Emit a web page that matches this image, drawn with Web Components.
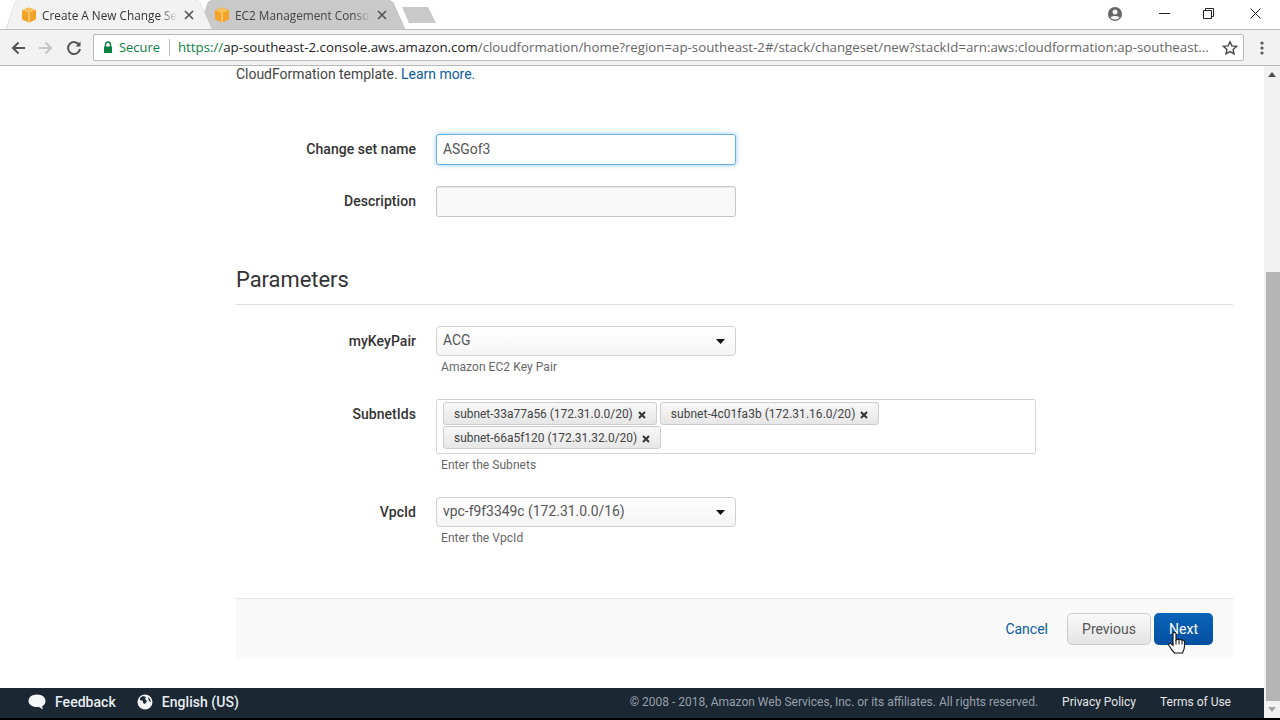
<!DOCTYPE html>
<html>
<head>
<meta charset="utf-8">
<title>Create A New Change Set</title>
<style>
  html, body { margin: 0; height: 100%; overflow: hidden; background: #000; }
  body { display: flex; flex-direction: column; height: 720px; font-family: Roboto, "Liberation Sans", sans-serif; }
</style>
</head>
<body>
<browser-bar></browser-bar>
<console-page>
  <form-panel></form-panel>
  <console-footer slot="footer"></console-footer>
</console-page>

<script>
const cube = `<svg width="16" height="16" viewBox="0 0 16 16"><path d="M8 .5l6 2.200c.6.200 1 .8 1 1.500v7.300c0 .7-.4 1.200-1 1.500L8 15.500l-6-2.500c-.6-.3-1-.8-1-1.500V4.200c0-.7.4-1.300 1-1.500z" fill="#f5a327"/><path d="M1.500 3.300L8 6l6.500-2.700L8 .8z" fill="#fac15f"/><path d="M8 6v9.500" stroke="#fde3b0" stroke-width="1"/></svg>`;

class BrowserTab extends HTMLElement {
    constructor() {
        super();
        this.attachShadow({ mode: 'open' });
    }

    connectedCallback() {
        this.shadowRoot.innerHTML = `
        <style>
            :host { display: block; margin-right: -19px; position: relative; filter: drop-shadow(0 0 .6px #8a8a8a); }
            :host([active]) { z-index: 1; }
            #tab {
                width: 212px; height: 29px; box-sizing: border-box; padding: 0 24px 0 15px;
                display: flex; align-items: center; gap: 5px;
                background: #c9c9c9; color: #444;
                clip-path: polygon(0 100%, 9px 8%, 13px 0, 190px 0, 194px 8%, 206px 100%);
                font: 11.800px "Open Sans", sans-serif;
            }
            :host([active]) #tab { background: #f2f2f2; color: #333; }
            #title { flex: 1; overflow: hidden; white-space: nowrap; margin-right: 2px; -webkit-mask-image: linear-gradient(90deg, #000 88%, transparent); }
            svg { flex: none; }
        </style>
        <div id="tab">${cube}<span id="title"><slot></slot></span>
            <svg width="10" height="10" viewBox="0 0 10 10"><path d="M1 1l8 8M9 1l-8 8" stroke="#555" stroke-width="1.700"/></svg>
        </div>`;
    }
}

class BrowserBar extends HTMLElement {
    constructor() {
        super();
        this.attachShadow({ mode: 'open' });
    }

    connectedCallback() {
        this.shadowRoot.innerHTML = `
        <style>
            :host { display: block; flex: none; font-family: "Open Sans", sans-serif; }
            #strip { height: 29px; display: flex; align-items: flex-start; padding-left: 6px; background: #fff; }
            #new-tab { width: 34px; height: 16px; margin: 7px 0 0 10px; background: #c9c9c9; clip-path: polygon(0 0, 26px 0, 34px 100%, 7px 100%); }
            #window { margin-left: auto; display: flex; align-items: center; height: 27px; padding-right: 19px; }
            #toolbar { box-sizing: border-box; background: #f2f2f2; border-top: 1px solid #bdbdbd; border-bottom: 1px solid #b8b8b8; display: flex; align-items: center; padding-left: 8px; height: 37px; position: relative; }
            .nav { width: 20px; height: 20px; margin-right: 8px; display: flex; align-items: center; justify-content: center; }
            #omni {
                width: 1151px; height: 27px; margin-left: 1px; box-sizing: border-box; background: #fff; border: 1px solid #b9b9b9; border-radius: 2px;
                display: flex; align-items: center; font-size: 13.300px; padding: 0 5px 0 9px; white-space: nowrap;
            }
            #secure { color: #0b8043; margin-left: 6px; padding-right: 9px; border-right: 1px solid #bbb; line-height: 17px; font-size: 12.900px; }
            #url { color: #666; margin-left: 8px; overflow: hidden; flex: 1; font-size: 13.290px; position: relative; top: -1px; }
            #url b { color: #0b8043; font-weight: 400; }
            #url i { color: #222; font-style: normal; }
        </style>
        <div id="strip">
            <browser-tab active>Create A New Change Set</browser-tab>
            <browser-tab>EC2 Management Console</browser-tab>
            <div id="new-tab"></div>
            <div id="window">
                <svg style="margin-right:36px" width="16" height="16" viewBox="0 0 16 16"><circle cx="8" cy="8" r="7" fill="#666"/><circle cx="8" cy="6" r="2.500" fill="#f5f5f5"/><path d="M3.500 11.500c1-2 8-2 9 0-1 1.500-2.500 2-4.500 2s-3.500-.5-4.500-2z" fill="#f5f5f5"/></svg>
                <svg style="margin-right:33px" width="11" height="11" viewBox="0 0 11 11"><path d="M0 5.500h11" stroke="#222"/></svg>
                <svg style="margin-right:36px" width="11" height="11" viewBox="0 0 11 11" fill="none" stroke="#222"><path d="M.5 2.500h8v8h-8zM2.500 2.500v-2h8v8h-2"/></svg>
                <svg style="margin-right:0" width="11" height="11" viewBox="0 0 11 11"><path d="M.5.5l10 10M10.500.5l-10 10" stroke="#222"/></svg>
            </div>
        </div>
        <div id="toolbar">
            <div class="nav"><svg width="16" height="16" viewBox="0 0 16 16" fill="none" stroke="#555" stroke-width="2"><path d="M15 8H3M8.500 2.500L3 8l5.500 5.500"/></svg></div>
            <div class="nav"><svg width="16" height="16" viewBox="0 0 16 16" fill="none" stroke="#c4c4c4" stroke-width="2"><path d="M1 8h12M7.500 2.500L13 8l-5.500 5.500"/></svg></div>
            <div class="nav"><svg width="16" height="16" viewBox="0 0 16 16" fill="none" stroke="#555" stroke-width="2"><path d="M13.500 5.500A6 6 0 1 0 14 9"/><path d="M14.500 1.500v5h-5z" fill="#555" stroke="none"/></svg></div>
            <div id="omni">
                <svg width="10" height="13" viewBox="0 0 10 13"><path d="M2.500 6V3.500a2.500 2.500 0 0 1 5 0V6" fill="none" stroke="#0b8043" stroke-width="1.400"/><rect x="1" y="5.500" width="8" height="6.500" fill="#0b8043"/></svg>
                <span id="secure">Secure</span>
                <span id="url"><b>https://</b><i>ap-southeast-2.console.aws.amazon.com</i>/cloudformation/home?region=ap-southeast-2#/stack/changeset/new?stackId=arn:aws:cloudformation:ap-southeast...</span>
                <svg width="16" height="16" viewBox="0 0 16 16"><path d="M8 1.800l1.900 4.100 4.500.5-3.300 3 .9 4.400L8 11.600l-4 2.200.9-4.400-3.300-3 4.500-.5z" fill="none" stroke="#444" stroke-width="1.400"/></svg>
            </div>
            <svg style="margin-left:16px" width="4" height="14" viewBox="0 0 4 14" fill="#555"><circle cx="2" cy="2" r="1.600"/><circle cx="2" cy="7" r="1.600"/><circle cx="2" cy="12" r="1.600"/></svg>
        </div>`;
    }
}

class ConsolePage extends HTMLElement {
    constructor() {
        super();
        this.attachShadow({ mode: 'open' });
    }

    connectedCallback() {
        this.shadowRoot.innerHTML = `
        <style>
            :host { display: flex; flex: none; height: 652px; background: #fff; }
            #column { flex: 1; min-width: 0; display: flex; flex-direction: column; }
            #main { flex: 1; min-height: 0; padding: 0 31px 0 236px; box-sizing: border-box; }
            #scrollbar { width: 16px; background: #f1f1f1; display: flex; flex-direction: column; align-items: center; box-sizing: border-box; }
            .arrow { height: 16px; flex: none; display: flex; align-items: center; justify-content: center; }
            #gutter { height: 190px; flex: none; }
            #thumb { width: 14px; flex: 1; background: #b4b4b4; margin-left: 1px; }
        </style>
        <div id="column">
            <div id="main"><slot></slot></div>
            <slot name="footer"></slot>
        </div>
        <div id="scrollbar">
            <div class="arrow"><svg width="8" height="5" viewBox="0 0 8 5"><path d="M4 0l4 5H0z" fill="#505050"/></svg></div>
            <div id="gutter"></div>
            <div id="thumb"></div>
            <div class="arrow" style="height:17px"><svg width="8" height="5" viewBox="0 0 8 5"><path d="M4 5l4-5H0z" fill="#a3a3a3"/></svg></div>
        </div>`;
    }
}

class FormRow extends HTMLElement {
    constructor() {
        super();
        this.attachShadow({ mode: 'open' });
    }

    connectedCallback() {
        const help = this.getAttribute('help');
        this.shadowRoot.innerHTML = `
        <style>
            :host { display: grid; grid-template-columns: 180px 1fr; column-gap: 20px; }
            label { font-size: 14px; font-weight: 500; color: #333; text-align: right; line-height: 30px; letter-spacing: .04px; }
            #help { font-size: 12px; color: #666; margin: 4px 0 0 5px; line-height: 14px; letter-spacing: .06px; }
        </style>
        <label>${this.getAttribute('label')}</label>
        <div><slot></slot>${help ? `<div id="help">${help}</div>` : ''}</div>`;
    }
}

class TextBox extends HTMLElement {
    constructor() {
        super();
        this.attachShadow({ mode: 'open' });
    }

    connectedCallback() {
        this.shadowRoot.innerHTML = `
        <style>
            :host { display: block; width: 300px; height: 31px; box-sizing: border-box; border: 1px solid #c6c6c6; border-radius: 3px; background: #f9f9f9; box-shadow: inset 0 1px 1px rgba(0,0,0,.06); padding: 0 6px; font-size: 13.900px; color: #555; line-height: 28px; }
            :host([focused]) { background: #fff; border-color: #66afe9; box-shadow: 0 0 5px rgba(102,175,233,.7); }
        </style>
        <slot></slot>`;
    }
}

class SelectBox extends HTMLElement {
    constructor() {
        super();
        this.attachShadow({ mode: 'open' });
    }

    connectedCallback() {
        this.shadowRoot.innerHTML = `
        <style>
            :host { display: flex; align-items: center; width: 300px; height: 30px; box-sizing: border-box; border: 1px solid #d0d0d0; border-radius: 4px; background: linear-gradient(#fff, #f5f5f5); padding: 0 10px 0 6px; font-size: 13.900px; color: #555; }
            span { flex: 1; position: relative; top: -1px; }
        </style>
        <span><slot></slot></span>
        <svg width="9" height="5" viewBox="0 0 9 5"><path d="M0 0h9L4.500 5z" fill="#111"/></svg>`;
    }
}

class TagChip extends HTMLElement {
    constructor() {
        super();
        this.attachShadow({ mode: 'open' });
    }

    connectedCallback() {
        this.shadowRoot.innerHTML = `
        <style>
            :host { display: inline-flex; align-items: center; gap: 5px; height: 23px; box-sizing: border-box; padding: 0 10px; border: 1px solid #ccc; border-radius: 3px; background: linear-gradient(#f8f8f8, #e6e6e6); font-size: 11.950px; color: #444; white-space: nowrap; }
            svg { position: relative; top: 1px; }
        </style>
        <slot></slot>
        <svg width="8" height="8" viewBox="0 0 8 8"><path d="M1 1l6 6M7 1L1 7" stroke="#333" stroke-width="2"/></svg>`;
    }
}

class FormPanel extends HTMLElement {
    constructor() {
        super();
        this.attachShadow({ mode: 'open' });
    }

    connectedCallback() {
        this.shadowRoot.innerHTML = `
        <style>
            :host { display: block; color: #444; }
            #intro { font-size: 13.950px; line-height: 16px; height: 16px; color: #444; }
            a { color: #0d5a9e; text-decoration: none; }
            h2 { font-size: 21.900px; font-weight: 400; color: #333; margin: 49px 0 21px; height: 38px; line-height: 28px; border-bottom: 1px solid #ddd; box-sizing: content-box; }
            #chips { width: 600px; height: 55px; box-sizing: border-box; border: 1px solid #d5d5d5; border-radius: 2px; padding: 2px 6px 0; display: flex; flex-wrap: wrap; gap: 1px 3px; align-content: flex-start; }
            #actions { margin-top: 53px; height: 60px; box-sizing: border-box; background: #f9f9f9; border-top: 1px solid #e6e6e6; display: flex; align-items: center; justify-content: flex-end; padding-right: 20px; font-size: 14px; }
            #cancel { margin-right: 19px; }
            .btn { height: 32px; box-sizing: border-box; display: flex; align-items: center; justify-content: center; border-radius: 5px; }
            #prev { width: 84px; margin-right: 3px; border: 1px solid #ccc; background: linear-gradient(#f9f9f9, #e4e4e4); color: #555; }
            #next { width: 59px; background: linear-gradient(#0a63b8, #0450a0); color: #fff; position: relative; }
            #cursor { position: absolute; left: 14px; top: 19px; }
        </style>
        <div id="intro">CloudFormation template. <a href="#">Learn more.</a></div>
        <form-row label="Change set name" style="margin-top:52px"><text-box focused>ASGof3</text-box></form-row>
        <form-row label="Description" style="margin-top:21px"><text-box></text-box></form-row>
        <h2>Parameters</h2>
        <form-row label="myKeyPair" help="Amazon EC2 Key Pair"><select-box>ACG</select-box></form-row>
        <form-row label="SubnetIds" help="Enter the Subnets" style="margin-top:25px">
            <div id="chips">
                <tag-chip>subnet-33a77a56 (172.31.0.0/20)</tag-chip>
                <tag-chip style="letter-spacing:.06px">subnet-4c01fa3b (172.31.16.0/20)</tag-chip>
                <tag-chip>subnet-66a5f120 (172.31.32.0/20)</tag-chip>
            </div>
        </form-row>
        <form-row label="VpcId" help="Enter the VpcId" style="margin-top:25px"><select-box>vpc-f9f3349c (172.31.0.0/16)</select-box></form-row>
        <div id="actions">
            <a id="cancel" href="#">Cancel</a>
            <div class="btn" id="prev">Previous</div>
            <div class="btn" id="next">Next
                <svg id="cursor" width="19" height="23" viewBox="0 0 19 23"><path d="M5 2c0-2 3-2 3 0v6c1-1 2.500-1 3 0 1-.8 2.500-.6 3 .4 1-.6 2.500 0 2.500 1.500v4c0 3-1 5-2 7.100H6.500C5 19.500 3 17 1 13.500c-.8-1.500 1-2.800 2.300-1.700L5 13.500z" fill="#fff" stroke="#111" stroke-width="1.100"/><path d="M8 8v4.500M11 8.500v4M14 9v3.500" stroke="#111" stroke-width="1" fill="none"/></svg>
            </div>
        </div>`;
    }
}

class ConsoleFooter extends HTMLElement {
    constructor() {
        super();
        this.attachShadow({ mode: 'open' });
    }

    connectedCallback() {
        this.shadowRoot.innerHTML = `
        <style>
            :host { display: flex; align-items: center; flex: none; height: 30px; box-sizing: border-box; padding: 0 33px 2px 28px; background: #1b2733; color: #e6e6e6; font-size: 12px; }
            .item { display: flex; align-items: center; gap: 9px; font-size: 14px; font-weight: 500; color: #e8edf2; margin-right: 21px; letter-spacing: .04px; }
            #copy { margin-left: auto; color: #98a1aa; margin-right: 24px; }
            .link + .link { margin-left: 24px; }
        </style>
        <span class="item"><svg width="18" height="16" viewBox="0 0 18 16"><path d="M9 .5c5 0 8.500 2.800 8.500 6.500 0 2.500-1.500 4.300-3.500 5.300l1 3.200-4-2.500C5 13.500.5 11 .5 7 .5 3.300 4 .5 9 .5z" fill="#f4f6f8"/></svg>Feedback</span>
        <span class="item"><svg width="16" height="16" viewBox="0 0 16 16"><circle cx="8" cy="8" r="7.500" fill="#f4f6f8"/><path d="M3 4l3-2 3 1-1 2 2 2-2 3-2-1v-2L3 6zM11 3l2 2 1 3-2-1z" fill="#1b2733"/></svg>English (US)</span>
        <span id="copy">© 2008 - 2018, Amazon Web Services, Inc. or its affiliates. All rights reserved.</span>
        <span class="link">Privacy Policy</span>
        <span class="link">Terms of Use</span>`;
    }
}

customElements.define('browser-tab', BrowserTab);
customElements.define('browser-bar', BrowserBar);
customElements.define('console-page', ConsolePage);
customElements.define('form-row', FormRow);
customElements.define('text-box', TextBox);
customElements.define('select-box', SelectBox);
customElements.define('tag-chip', TagChip);
customElements.define('form-panel', FormPanel);
customElements.define('console-footer', ConsoleFooter);
</script>
</body>
</html>
